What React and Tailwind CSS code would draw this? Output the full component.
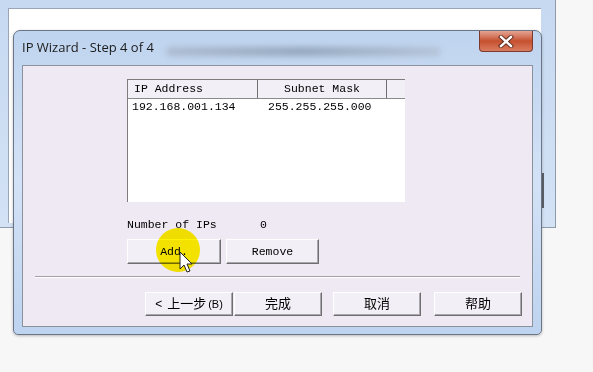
export default function App() {
  const mono = { fontFamily: '"Liberation Mono", "DejaVu Sans Mono", monospace' };
  const cjk = { fontFamily: '"Liberation Sans", "Noto Sans CJK SC", sans-serif' };
  const btn =
    "flex items-center justify-center bg-[#f3eff6] border border-t-white border-l-white border-r-[#6f6f6f] border-b-[#6f6f6f] shadow-[inset_-1px_-1px_0_#a9a6ad] text-black";

  return (
    <div className="relative w-[593px] h-[372px] overflow-hidden bg-[#f7f7f7]">
      {/* window behind the dialog */}
      <div className="absolute left-0 top-0 w-[556px] h-[228px] bg-gradient-to-b from-[#c6d9f1] to-[#d3e2f5] border-r border-b border-[#8f9aaa] pl-[8px] pt-[8px] pr-[14px] pb-[4px]">
        <div className="w-full h-full bg-white border-l border-t border-[#9aa6b8]"></div>
      </div>
      <div className="absolute left-[541px] top-[173px] w-[3px] h-[35px] bg-[#5d6168]"></div>

      {/* dialog */}
      <div className="absolute left-[13px] top-[30px] w-[529px] h-[305px] flex flex-col rounded-t-[7px] rounded-b-[5px] border border-[#6b7585] bg-gradient-to-b from-[#bfd4ef] via-[#d3e2f6] to-[#bdd3ef] shadow-[0_1px_3px_rgba(0,0,0,0.25)]">
        <div className="relative h-[34px] flex items-center pl-[8px]">
          <span
            className="text-[13px] text-[#1b1b1b]"
            style={{ fontFamily: '"Open Sans", "Noto Sans", sans-serif' }}
          >
            IP Wizard - Step 4 of 4
          </span>
          <div className="ml-[12px] mt-[6px] w-[275px] h-[9px] rounded-full bg-gradient-to-r from-[#a7b4c6] via-[#8798ae] to-[#b1bfd1] blur-[3px] opacity-80"></div>
          <div className="absolute right-[8px] top-0 w-[54px] h-[21px] rounded-b-[4px] border border-t-0 border-[#7c3a2e] bg-gradient-to-b from-[#e3a493] via-[#c5502f] to-[#d97c5f] flex items-center justify-center">
            <svg width="16" height="13" viewBox="0 0 16 13">
              <path
                d="M3 2 L13 11 M13 2 L3 11"
                stroke="#5a2418"
                strokeWidth="4.2"
                strokeLinecap="square"
              />
              <path
                d="M3 2 L13 11 M13 2 L3 11"
                stroke="#ffffff"
                strokeWidth="2.4"
                strokeLinecap="square"
              />
            </svg>
          </div>
        </div>

        {/* client area */}
        <div className="ml-[8px] mr-[8px] mb-[7px] flex-1 border border-[#8b929c] bg-[#efe9f4] flex flex-col">
          <div className="ml-[104px] mt-[13px] w-[278px] h-[123px] bg-white border-l border-t border-[#7d7d7d] flex flex-col" style={mono}>
            <div className="flex h-[19px] text-[11.5px] bg-[#f3eff6] border-b border-[#8a8a8a]">
              <div className="w-[130px] border-r border-[#6f6f6f] pl-[6px] flex items-center">IP Address</div>
              <div className="w-[129px] border-r border-[#6f6f6f] flex items-center justify-center">Subnet Mask</div>
              <div className="flex-1"></div>
            </div>
            <div className="flex h-[15px] items-center text-[11.5px] text-black">
              <div className="w-[140px] pl-[4px]">192.168.001.134</div>
              <div>255.255.255.000</div>
            </div>
          </div>

          <div className="ml-[104px] mt-[16px] flex items-center h-[14px] text-[11.5px] text-black" style={mono}>
            <span className="w-[133px]">Number of IPs</span>
            <span>0</span>
          </div>

          <div className="ml-[104px] mt-[7px] flex gap-[5px] text-[11.5px]" style={mono}>
            <div className={btn + " w-[94px] h-[25px]"}>Add.</div>
            <div className={btn + " w-[93px] h-[25px]"}>Remove</div>
          </div>

          <div className="ml-[12px] mt-[12px] w-[485px] h-[2px] border-t border-[#a3a0a6] border-b border-b-white"></div>

          <div className="ml-[122px] mt-[14px] flex text-[13px]" style={cjk}>
            <div className={btn + " w-[88px] h-[24px]"}>
              <span className="text-[12px] mr-[5px]">&lt;</span>
              <span>上一步</span>
              <span className="text-[11px] ml-[2px]">(B)</span>
            </div>
            <div className={btn + " w-[88px] h-[24px] ml-[1px]"}>完成</div>
            <div className={btn + " w-[88px] h-[24px] ml-[11px]"}>取消</div>
            <div className={btn + " w-[88px] h-[24px] ml-[13px]"}>帮助</div>
          </div>
        </div>
      </div>

      {/* cursor highlight */}
      <div className="absolute left-[156px] top-[228px] w-[44px] h-[44px] rounded-full bg-[#fff200] mix-blend-multiply blur-[0.5px]"></div>
      <svg className="absolute left-[179px] top-[251px]" width="14" height="23" viewBox="0 0 14 23">
        <path
          d="M1 1 L1 18 L5 14 L8 21 L11 20 L8 13 L13 13 Z"
          fill="#ffffff"
          stroke="#222222"
          strokeWidth="1"
          strokeLinejoin="miter"
        />
      </svg>
    </div>
  );
}
